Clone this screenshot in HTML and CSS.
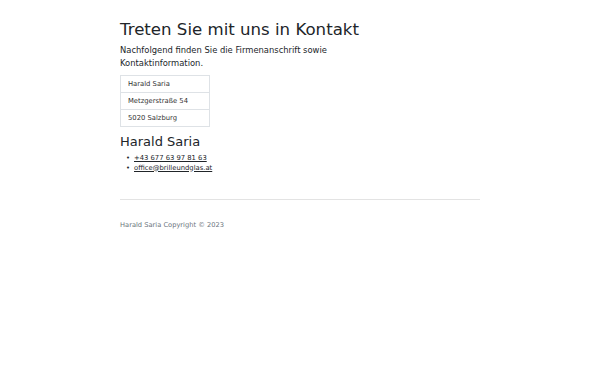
FILE: index.html
```html
<!DOCTYPE html>
<html lang="de">
<head>
  <meta charset="UTF-8">
  <meta name="viewport" content="width=device-width, initial-scale=1.0">
  <title>Kontakt</title>
  <link rel="stylesheet" href="styles.css">
</head>
<body>

<div class="container">
  <main class="content">
    <h1 class="title">Treten Sie mit uns in Kontakt</h1>
    <p class="intro">Nachfolgend finden Sie die Firmenanschrift sowie Kontaktinformation.</p>

    <table class="address">
      <tr><td>Harald Saria</td></tr>
      <tr><td>Metzgerstraße 54</td></tr>
      <tr><td>5020 Salzburg</td></tr>
    </table>

    <h2 class="name">Harald Saria</h2>
    <ul class="contact-list">
      <li><a href="#">+43 677 63 97 81 63</a></li>
      <li><a href="#">office@brilleundglas.at</a></li>
    </ul>
  </main>

  <footer class="footer">
    <hr>
    <p>Harald Saria Copyright © 2023</p>
  </footer>
</div>

</body>
</html>
```

FILE: styles.css
```css
body {
  margin: 0;
  font-family: "DejaVu Sans", sans-serif;
  color: #212529;
  background-color: #fff;
}

.container {
  width: 360px;
  margin: 0 auto;
  padding-top: 20px;
}

.content {
  width: 245px;
}

.title {
  font-size: 16.6px;
  font-weight: 400;
  line-height: 1.2;
  margin: 0 0 4px;
}

.intro {
  font-size: 8.4px;
  line-height: 13px;
  margin: 0 0 5px;
}

.address {
  border-collapse: collapse;
  width: 90px;
  margin-bottom: 7px;
}

.address td {
  font-size: 6.8px;
  color: #333;
  border: 1px solid #dee2e6;
  padding: 0 7px;
  height: 16px;
}

.name {
  font-size: 13px;
  font-weight: 400;
  line-height: 1.2;
  margin: 0 0 3px;
}

.contact-list {
  list-style: none;
  margin: 0;
  padding-left: 6px;
  font-size: 6.8px;
  line-height: 10px;
}

.contact-list li::before {
  content: "•";
  display: inline-block;
  width: 8px;
}

.contact-list a {
  color: #212529;
}

.footer hr {
  border: 0;
  border-top: 1px solid #e3e3e3;
  margin: 26px 0 0;
}

.footer p {
  font-size: 6.7px;
  color: #6c757d;
  margin: 21px 0 0;
}
```
